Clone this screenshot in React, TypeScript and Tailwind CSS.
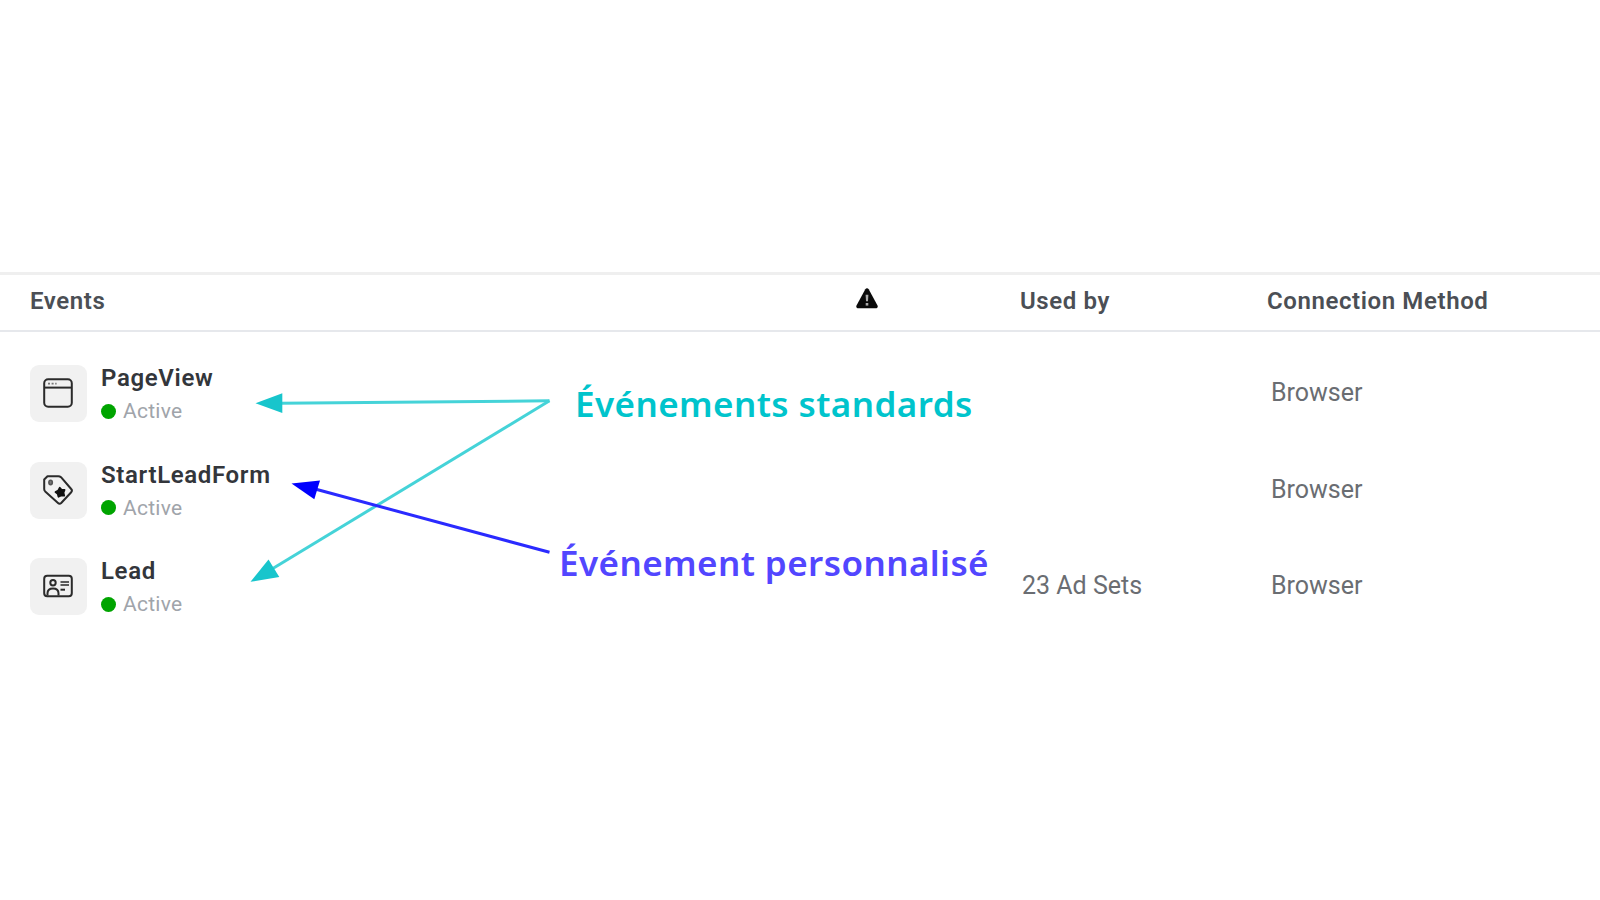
import React from 'react';

const WindowIcon = () => (
  <svg width="30" height="30" viewBox="0 0 30 30" fill="none" stroke="#2b2b2b" strokeWidth="2">
    <rect x="1.2" y="1.2" width="27.6" height="27.6" rx="4" />
    <path d="M1.2 9.6h27.6" />
    <path d="M5 5.6h2M8.6 5.6h2M12.2 5.6h1.4" strokeWidth="1.6" stroke="#777" />
  </svg>
);

const TagIcon = () => (
  <svg width="30" height="30" viewBox="0 0 30 30" fill="none" stroke="#2b2b2b" strokeWidth="2" strokeLinejoin="round">
    <path d="M4.5 1.2h10.8c1 0 1.900.3 2.700 1L28.200 14c1 1 1 2.200 0 3.200L18.200 28c-1 1-2.200 1-3.200 0L2.200 16.400c-.6-.6-1-1.500-1-2.400V4.500z" />
    <ellipse cx="7.600" cy="7.400" rx="1.700" ry="2.200" fill="#777" stroke="#555" strokeWidth="1.600" />
    <path
      d="M16.800 12.700l1.500 1.900 3.200.4-1 2.700.7 2.900-3-.2-2.700 1.300-.8-2.900-2.200-1.800 2.800-1.500z"
      fill="#111"
      stroke="#111"
      strokeWidth="1.800"
    />
  </svg>
);

const ContactIcon = () => (
  <svg width="30" height="30" viewBox="0 0 30 30" fill="none" stroke="#2b2b2b" strokeWidth="2">
    <rect x="1.2" y="4.7" width="27.6" height="20.6" rx="3" />
    <circle cx="10" cy="11.7" r="2.7" />
    <path d="M4.500 24.500v-2.200c0-3 2-4.800 5.500-4.800s5.500 1.800 5.500 4.800v2.200" />
    <path d="M17.500 11h8.500M17.500 14h8.500" strokeWidth="1.700" />
    <path d="M17.500 18.700h4.500" />
  </svg>
);

const WarningIcon = () => (
  <svg width="22" height="21" viewBox="0 0 22 21">
    <path d="M9.300 1.300c.8-1.300 2.600-1.300 3.400 0l8.800 16.200c.7 1.300-.2 2.800-1.700 2.800H2.200c-1.500 0-2.400-1.500-1.700-2.800z" fill="#0a0a0a" />
    <path d="M9.600 6.800h2.800l-.4 6.500h-2z" fill="#aaa" />
    <rect x="9.700" y="15" width="2.600" height="2.600" fill="#aaa" />
  </svg>
);

const events = [
  { name: 'PageView', icon: WindowIcon, usedBy: '', method: 'Browser' },
  { name: 'StartLeadForm', icon: TagIcon, usedBy: '', method: 'Browser' },
  { name: 'Lead', icon: ContactIcon, usedBy: '23 Ad Sets', method: 'Browser' },
];

function Arrows() {
  return (
    <svg className="absolute left-0 top-0 pointer-events-none" width="1600" height="900" viewBox="0 0 1600 900">
      <g stroke="#45d3d8" strokeWidth="3" fill="none">
        <path d="M280 403.200L549.500 400.800" />
        <path d="M272 569L549.500 400.800" />
      </g>
      <path d="M255.500 403.300L282.300 393.300V413z" fill="#18c5cc" />
      <path d="M250.500 581.800L268.500 559.500L279.300 577z" fill="#18c5cc" />
      <path d="M316 489.300L549.500 552.300" stroke="#2a2aff" strokeWidth="3" />
      <path d="M291.500 483.500L320 480.500L314.300 499.300z" fill="#0000fe" />
    </svg>
  );
}

export default function App() {
  return (
    <div className="relative w-[1600px] h-[900px] overflow-hidden bg-white pt-[272px] font-[Roboto,sans-serif]">
      <div className="grid grid-cols-[826px_164px_247px_1fr] items-center h-[60px] pl-[30px] pb-[4px] border-t-[3px] border-b-[2px] border-t-[#efefef] border-b-[#e6e8ec] text-[24px] leading-[28px] tracking-[0.6px] font-semibold text-[#4b4f55]">
        <span>Events</span>
        <span className="-mt-1"><WarningIcon /></span>
        <span>Used by</span>
        <span>Connection Method</span>
      </div>

      <div className="pt-[33px] flex flex-col gap-[39.5px]">
        {events.map((event) => (
          <div key={event.name} className="grid grid-cols-[990px_249px_1fr] h-[57px] pl-[30px]">
            <div className="flex">
              <div className="w-[57px] h-[57px] rounded-[9px] bg-[#f1f1f1] flex items-center justify-center pr-[1px] pb-[1px]">
                <event.icon />
              </div>
              <div className="ml-[14px]">
                <p className="text-[24px] leading-[28px] font-semibold text-[#33363b] -mt-[1px] tracking-[0.65px]">{event.name}</p>
                <div className="flex items-center gap-[7px] mt-[7px]">
                  <span className="w-[15px] h-[15px] rounded-full bg-[#00a400]" />
                  <span className="text-[21px] leading-[24px] tracking-[0.25px] text-[#a0a4aa]">Active</span>
                </div>
              </div>
            </div>
            <span className="self-center pl-[2px] pb-[2px] text-[25px] leading-[28px] text-[#6a6d72]">{event.usedBy}</span>
            <span className="self-center pl-[2px] pb-[2px] text-[25px] leading-[28px] text-[#6a6d72]">{event.method}</span>
          </div>
        ))}
      </div>

      <Arrows />
      <span className="absolute left-[575px] top-[380px] whitespace-nowrap font-['Noto_Sans',sans-serif] font-semibold text-[35px] leading-[48px] tracking-[0.42px] text-[#00c4cc]">Événements standards</span>
      <span className="absolute left-[559px] top-[539px] whitespace-nowrap font-['Noto_Sans',sans-serif] font-semibold text-[35px] leading-[48px] tracking-[0.42px] text-[#5246ff]">Événement personnalisé</span>
    </div>
  );
}
